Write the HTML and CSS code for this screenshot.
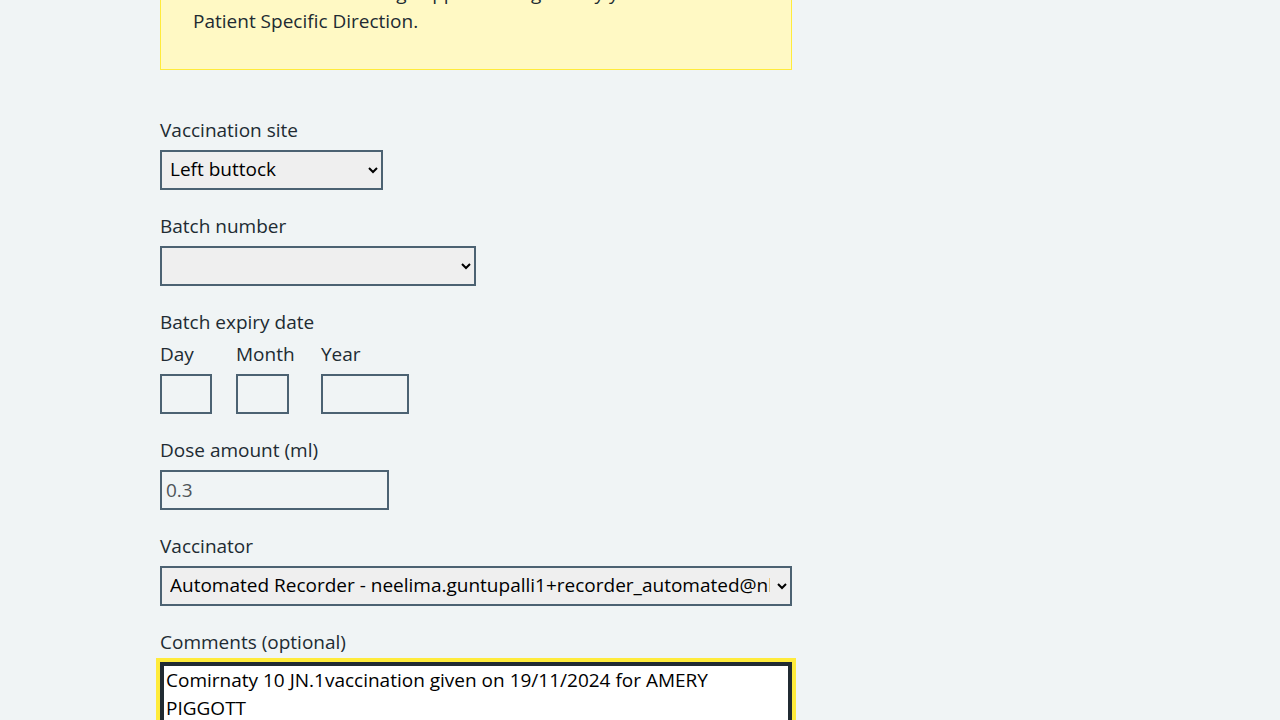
FILE: index.html
```html
<!DOCTYPE html>
<html lang="en">
<head>
<meta charset="utf-8">
<title>Record vaccination</title>
<link rel="stylesheet" href="styles.css">
</head>
<body>
<main class="page">
  <div class="callout">
    <p class="callout-text">This vaccination is being supplied and given by you under a<br>Patient Specific Direction.</p>
  </div>

  <form class="form">
    <div class="form-group">
      <label class="label" for="site">Vaccination site</label>
      <select class="select select-site" id="site">
        <option>Left buttock</option>
        <option>Right buttock</option>
        <option>Left upper arm</option>
        <option>Right upper arm</option>
      </select>
    </div>

    <div class="form-group">
      <label class="label" for="batch">Batch number</label>
      <select class="select select-batch" id="batch">
        <option></option>
      </select>
    </div>

    <fieldset class="form-group fieldset">
      <legend class="legend">Batch expiry date</legend>
      <div class="date-input">
        <div class="date-item">
          <label class="label" for="day">Day</label>
          <input class="input input-day" id="day" type="text" inputmode="numeric">
        </div>
        <div class="date-item date-item-month">
          <label class="label" for="month">Month</label>
          <input class="input input-month" id="month" type="text" inputmode="numeric">
        </div>
        <div class="date-item">
          <label class="label" for="year">Year</label>
          <input class="input input-year" id="year" type="text" inputmode="numeric">
        </div>
      </div>
    </fieldset>

    <div class="form-group">
      <label class="label" for="dose">Dose amount (ml)</label>
      <input class="input input-dose" id="dose" type="text" placeholder="0.3">
    </div>

    <div class="form-group">
      <label class="label" for="vaccinator">Vaccinator</label>
      <select class="select select-full" id="vaccinator">
        <option>Automated Recorder - neelima.guntupalli1+recorder_automated@nhs.net</option>
      </select>
    </div>

    <div class="form-group">
      <label class="label" for="comments">Comments (optional)</label>
      <textarea class="textarea is-focused" id="comments" rows="4">Comirnaty 10 JN.1vaccination given on 19/11/2024 for AMERY PIGGOTT</textarea>
    </div>
  </form>
</main>
</body>
</html>
```

FILE: styles.css
```css
html, body {
  margin: 0;
  padding: 0;
  background: #f0f4f5;
}

body {
  font-family: "Open Sans", "Noto Sans", Arial, sans-serif;
  font-size: 19px;
  line-height: 28px;
  color: #212b32;
}

.page {
  width: 632px;
  margin: -54px 0 0 160px;
}

.callout {
  background: #fff9c4;
  border: 1px solid #ffeb3b;
  padding: 32px 32px 34px 32px;
  margin-bottom: 44px;
}

.callout-text {
  margin: 0;
}

.form {
  margin: 0;
}

.form-group {
  margin: 0 0 20px 0;
}

.fieldset {
  border: 0;
  padding: 0;
  min-width: 0;
}

.label,
.legend {
  display: block;
  font-size: 19px;
  line-height: 28px;
  color: #212b32;
  padding-top: 2px;
  margin-bottom: 6px;
}

.legend {
  margin-bottom: 2px;
  padding-left: 0;
  padding-right: 0;
  padding-bottom: 0;
}

.select,
.input,
.textarea {
  box-sizing: border-box;
  font-family: inherit;
  font-size: 19px;
  border: 2px solid #4c6272;
  border-radius: 0;
  margin: 0;
}

.select {
  display: block;
  height: 40px;
  padding: 2px 4px 4px 4px;
  background-color: #efefef;
  color: #000;
}

.select-site {
  width: 223px;
}

.select-batch {
  width: 316px;
}

.select-full {
  width: 632px;
}

.input {
  display: block;
  height: 40px;
  padding: 4px;
  background: transparent;
  color: #212b32;
  line-height: 28px;
}

.input::placeholder {
  color: #4f5559;
  opacity: 1;
}

.date-input {
  display: flex;
}

.date-item {
  margin-right: 24px;
}

.date-item-month {
  min-width: 61px;
}

.input-day {
  width: 52px;
}

.input-month {
  width: 53px;
}

.input-year {
  width: 88px;
}

.input-dose {
  width: 229px;
}

.textarea {
  display: block;
  width: 632px;
  padding: 2px 4px 4px 4px;
  line-height: 28px;
  background: #fff;
  color: #000;
  resize: vertical;
}

.textarea.is-focused {
  border-color: #212b32;
  box-shadow: inset 0 0 0 2px #212b32;
  outline: 4px solid #ffeb3b;
  outline-offset: 0;
}
```
